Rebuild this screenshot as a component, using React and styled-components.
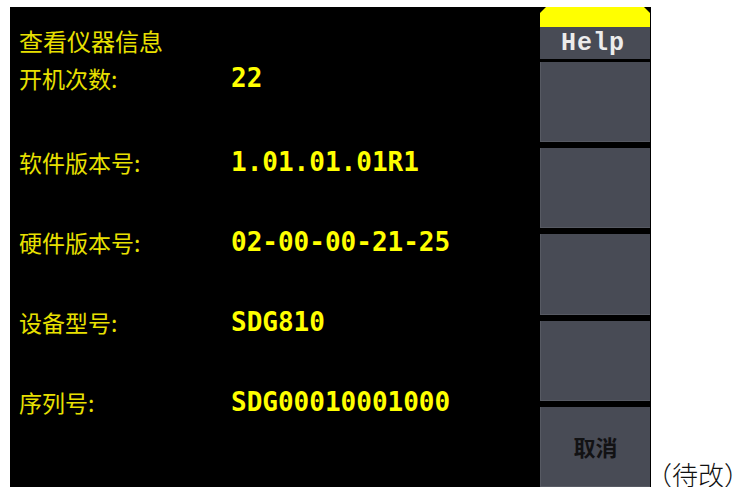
import styled, { createGlobalStyle } from 'styled-components';

const GlobalStyle = createGlobalStyle`
	html, body {
		margin: 0;
		padding: 0;
		background: #fff;
		overflow: hidden;
	}
`;

const Page = styled.div`
	display: flex;
	align-items: flex-end;
	padding: 7px 0 0 10px;
`;

const Screen = styled.div`
	display: flex;
	flex-shrink: 0;
	width: 641px;
	height: 480px;
	background: #000;
`;

const Info = styled.div`
	flex: 1;
	display: flex;
	flex-direction: column;
	padding: 18px 0 0 9px;
`;

const Title = styled.div`
	height: 32px;
	line-height: 32px;
	margin-bottom: 5px;
	font-family: 'Noto Sans CJK SC', sans-serif;
	font-size: 24px;
	color: #e8e000;
`;

const Rows = styled.div`
	display: flex;
	flex-direction: column;
	gap: 48px;
`;

const Row = styled.div`
	display: grid;
	grid-template-columns: 212px 1fr;
	height: 32px;
	line-height: 32px;
	margin-bottom: ${(p) => (p.$first ? '4px' : '0')};
`;

const Label = styled.span`
	font-family: 'Noto Sans CJK SC', sans-serif;
	font-size: 23px;
	color: #e8e000;
`;

const Value = styled.span`
	font-family: 'DejaVu Sans Mono', monospace;
	font-weight: bold;
	font-size: 26px;
	color: #ffff00;
`;

const Menu = styled.div`
	width: 110px;
	margin-right: 1px;
	display: flex;
	flex-direction: column;
`;

const Tab = styled.div`
	height: 20px;
	background: #ffff00;
	clip-path: polygon(6px 0, calc(100% - 6px) 0, 100% 6px, 100% 100%, 0 100%, 0 6px);
`;

const Header = styled.div`
	height: 32px;
	background: #484b55;
	display: flex;
	align-items: center;
	justify-content: center;
	font-family: 'Liberation Mono', monospace;
	font-weight: bold;
	font-size: 25px;
	letter-spacing: 1px;
	color: #ececec;
	padding-right: 4px;
`;

const Buttons = styled.div`
	flex: 1;
	display: flex;
	flex-direction: column;
	gap: 6px;
	padding-top: 3px;
`;

const Button = styled.div`
	flex: 1;
	background: #484b55;
	border-left: 1px solid #575a63;
	border-bottom: 1px solid #575a63;
	display: flex;
	align-items: center;
	justify-content: center;
	font-family: 'Noto Sans CJK SC', sans-serif;
	font-weight: 700;
	font-size: 22px;
	color: #121214;
`;

const Note = styled.span`
	flex-shrink: 0;
	font-family: 'Noto Sans CJK SC', sans-serif;
	font-weight: 300;
	font-size: 26px;
	line-height: 1;
	color: #111;
	margin-left: -5px;
`;

const rows = [
	['开机次数:', '22'],
	['软件版本号:', '1.01.01.01R1'],
	['硬件版本号:', '02-00-00-21-25'],
	['设备型号:', 'SDG810'],
	['序列号:', 'SDG00010001000'],
];

export default function App() {
	return (
		<>
			<GlobalStyle />
			<Page>
				<Screen>
					<Info>
						<Title>查看仪器信息</Title>
						<Rows>
							{rows.map(([label, value], i) => (
								<Row key={label} $first={i === 0}>
									<Label>{label}</Label>
									<Value>{value}</Value>
								</Row>
							))}
						</Rows>
					</Info>
					<Menu>
						<Tab />
						<Header>Help</Header>
						<Buttons>
							<Button />
							<Button />
							<Button />
							<Button />
							<Button>取消</Button>
						</Buttons>
					</Menu>
				</Screen>
				<Note>（待改）</Note>
			</Page>
		</>
	);
}
